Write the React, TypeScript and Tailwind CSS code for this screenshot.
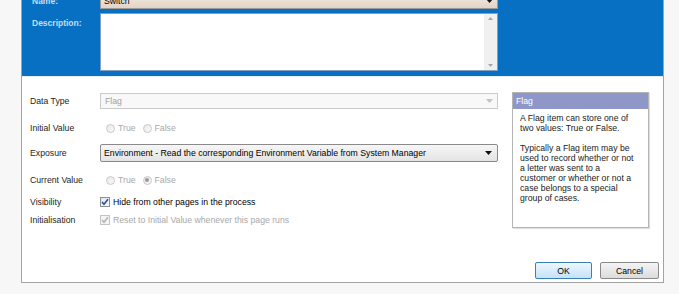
import React from "react";

function Radio({ checked = false }: { checked?: boolean }) {
  return (
    <span className="relative inline-flex items-center justify-center w-[9px] h-[9px] rounded-full border border-[#c9c9c9] bg-gradient-to-br from-[#e8e8e8] to-[#fafafa]">
      {checked && <span className="w-[4px] h-[4px] rounded-full bg-[#9a9a9a]" />}
    </span>
  );
}

function Check({ disabled = false }: { disabled?: boolean }) {
  return (
    <span
      className={
        disabled
          ? "inline-flex items-center justify-center w-[10px] h-[10px] border border-[#c4c4c4] bg-[#f4f4f4]"
          : "inline-flex items-center justify-center w-[10px] h-[10px] border border-[#8e8f8f] bg-gradient-to-br from-[#dfe6f0] to-[#f6f8fb]"
      }
    >
      <svg width="8" height="8" viewBox="0 0 8 8">
        <path
          d="M1 4 L3 6.2 L7 1.2"
          fill="none"
          stroke={disabled ? "#b5b5b5" : "#2f4f8f"}
          strokeWidth="1.6"
        />
      </svg>
    </span>
  );
}

function Arrow({ color }: { color: string }) {
  return (
    <svg width="7" height="4" viewBox="0 0 7 4">
      <path d="M0 0 L7 0 L3.5 4 Z" fill={color} />
    </svg>
  );
}

export default function App() {
  return (
    <div className="w-[679px] h-[294px] overflow-hidden bg-[#f7f7f7] font-['Liberation_Sans',Arial,sans-serif] text-[8.7px] leading-[10px] text-[#1e1e1e]">
      <div className="ml-[21px] -mt-[8px] w-[643px] h-[291px] border border-[#a3a3a3] bg-white flex flex-col">
        {/* Blue header */}
        <div className="h-[84px] bg-[#0870c3] pl-[10px] flex flex-col border-b border-[#e6eef6]">
          <div className="flex items-center h-[16px]">
            <span className="w-[68px] text-[#c6ddf2] font-bold text-[8.5px]">Name:</span>
            <div className="w-[398px] h-[16px] border border-[#9b9b9b] bg-gradient-to-b from-[#f3ebe3] to-[#e2d4c6] flex items-center justify-between pl-[3px] pr-[4px]">
              <span className="text-black">Switch</span>
              <Arrow color="#111" />
            </div>
          </div>
          <div className="flex mt-[4px]">
            <span className="w-[68px] text-[#c6ddf2] font-bold text-[8.5px] pt-[5px]">Description:</span>
            <div className="w-[398px] h-[58px] border border-[#7f9fc3] bg-white flex justify-end">
              <div className="w-[13px] h-full bg-[#f0f0f0] flex flex-col items-center justify-between py-[3px]">
                <svg width="5" height="3" viewBox="0 0 5 3"><path d="M0 3 L2.5 0 L5 3 Z" fill="#a8a8a8" /></svg>
                <svg width="5" height="3" viewBox="0 0 5 3"><path d="M0 0 L5 0 L2.5 3 Z" fill="#a8a8a8" /></svg>
              </div>
            </div>
          </div>
        </div>

        {/* Content */}
        <div className="flex-1 flex flex-col pl-[8px] pt-[16px] pr-[4px] pb-[3px]">
          <div className="flex">
            <div className="w-[468px] flex flex-col">
              <div className="flex items-center h-[16px]">
                <span className="w-[70px]">Data Type</span>
                <div className="w-[398px] h-[16px] border border-[#cacaca] bg-[#f8f8f8] flex items-center justify-between pl-[4px] pr-[4px]">
                  <span className="text-[#a2a2a2]">Flag</span>
                  <Arrow color="#c2c2c2" />
                </div>
              </div>
              <div className="flex items-center h-[16px] mt-[11px]">
                <span className="w-[76px]">Initial Value</span>
                <div className="flex items-center gap-[3px] text-[#a8a8a8]">
                  <Radio />
                  <span>True</span>
                  <span className="w-[1px]" />
                  <Radio />
                  <span>False</span>
                </div>
              </div>
              <div className="flex items-center h-[18px] mt-[8px]">
                <span className="w-[70px]">Exposure</span>
                <div className="w-[398px] h-[18px] border border-[#8a8a8a] rounded-[2px] bg-gradient-to-b from-[#f6f6f6] to-[#e4e4e4] flex items-center justify-between pl-[3px] pr-[5px]">
                  <span className="text-black">Environment - Read the corresponding Environment Variable from System Manager</span>
                  <Arrow color="#111" />
                </div>
              </div>
              <div className="flex items-center h-[16px] mt-[10px]">
                <span className="w-[76px]">Current Value</span>
                <div className="flex items-center gap-[3px] text-[#a8a8a8]">
                  <Radio />
                  <span>True</span>
                  <span className="w-[1px]" />
                  <Radio checked />
                  <span>False</span>
                </div>
              </div>
              <div className="flex items-center h-[16px] mt-[6px]">
                <span className="w-[70px]">Visibility</span>
                <div className="flex items-center gap-[3px]">
                  <Check />
                  <span className="text-black">Hide from other pages in the process</span>
                </div>
              </div>
              <div className="flex items-center h-[16px] mt-[2px]">
                <span className="w-[70px]">Initialisation</span>
                <div className="flex items-center gap-[3px]">
                  <Check disabled />
                  <span className="text-[#a8a8a8]">Reset to Initial Value whenever this page runs</span>
                </div>
              </div>
            </div>

            <div className="ml-[14px] -mt-[1px] w-[137px] h-[136px] border border-[#b4b4b4] shadow-[1px_1px_1px_rgba(0,0,0,0.12)] bg-white flex flex-col">
              <div className="h-[16px] bg-[#8f96c8] text-white pl-[3px] flex items-center">Flag</div>
              <div className="pl-[7px] pt-[4px] whitespace-nowrap text-[#222]">
                <div>A Flag item can store one of</div>
                <div>two values: True or False.</div>
                <div className="h-[10px]" />
                <div>Typically a Flag item may be</div>
                <div>used to record whether or not</div>
                <div>a letter was sent to a</div>
                <div>customer or whether or not a</div>
                <div>case belongs to a special</div>
                <div>group of cases.</div>
              </div>
            </div>
          </div>

          <div className="mt-auto flex justify-end gap-[8px]">
            <button className="w-[57px] h-[17px] border border-[#3c7fb1] rounded-[2px] bg-gradient-to-b from-[#eef7fd] to-[#c4e2f7] text-black text-[8.7px] flex items-center justify-center">
              OK
            </button>
            <button className="w-[59px] h-[17px] border border-[#8a8a8a] rounded-[2px] bg-gradient-to-b from-[#f4f4f4] to-[#dcdcdc] text-black text-[8.7px] flex items-center justify-center">
              Cancel
            </button>
          </div>
        </div>
      </div>
    </div>
  );
}
